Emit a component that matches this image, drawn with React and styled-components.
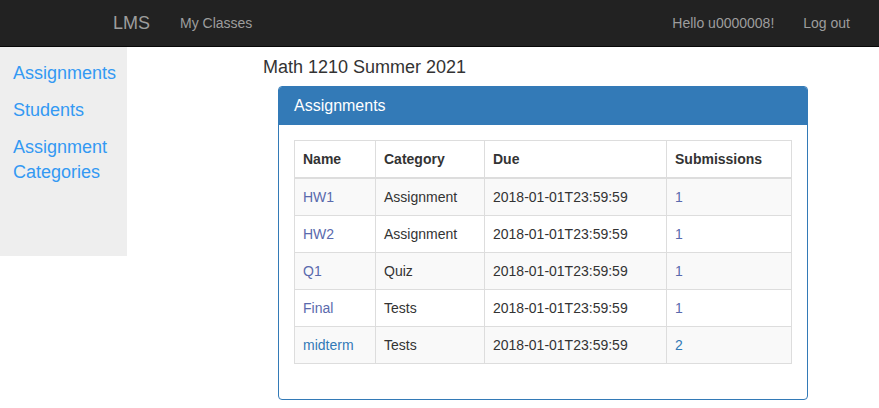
import React from "react";
import styled, { createGlobalStyle } from "styled-components";

const rows = [
  { name: "HW1", category: "Assignment", due: "2018-01-01T23:59:59", subs: "1", visited: true },
  { name: "HW2", category: "Assignment", due: "2018-01-01T23:59:59", subs: "1", visited: true },
  { name: "Q1", category: "Quiz", due: "2018-01-01T23:59:59", subs: "1", visited: true },
  { name: "Final", category: "Tests", due: "2018-01-01T23:59:59", subs: "1", visited: true },
  { name: "midterm", category: "Tests", due: "2018-01-01T23:59:59", subs: "2", visited: false },
];

const App = () => {
  return (
    <>
      <GlobalStyle />
      <Navbar>
        <NavLeft>
          <Brand>LMS</Brand>
          <NavLink>My Classes</NavLink>
        </NavLeft>
        <NavRight>
          <NavLink>Hello u0000008!</NavLink>
          <NavLink>Log out</NavLink>
        </NavRight>
      </Navbar>
      <Layout>
        <Sidebar>
          <SideLink>Assignments</SideLink>
          <SideLink>Students</SideLink>
          <SideLink>Assignment Categories</SideLink>
        </Sidebar>
        <Main>
          <Title>Math 1210 Summer 2021</Title>
          <Panel>
            <PanelHeading>Assignments</PanelHeading>
            <PanelBody>
              <Table>
                <colgroup>
                  <col style={{ width: 81 }} />
                  <col style={{ width: 109 }} />
                  <col style={{ width: 182 }} />
                  <col style={{ width: 125 }} />
                </colgroup>
                <thead>
                  <tr>
                    <Th>Name</Th>
                    <Th>Category</Th>
                    <Th>Due</Th>
                    <Th>Submissions</Th>
                  </tr>
                </thead>
                <tbody>
                  {rows.map((r, i) => (
                    <Row key={r.name} $striped={i % 2 === 0}>
                      <Td>
                        <CellLink $visited={r.visited}>{r.name}</CellLink>
                      </Td>
                      <Td>{r.category}</Td>
                      <Td>{r.due}</Td>
                      <Td>
                        <CellLink $visited={r.visited}>{r.subs}</CellLink>
                      </Td>
                    </Row>
                  ))}
                </tbody>
              </Table>
            </PanelBody>
          </Panel>
        </Main>
      </Layout>
    </>
  );
};

export default App;

const GlobalStyle = createGlobalStyle`
  body {
    margin: 0;
    background: #fff;
    font-family: "Liberation Sans", Arial, sans-serif;
    font-size: 14px;
    color: #333;
  }
`;
const Navbar = styled.nav`
  height: 46px;
  background: #222;
  border-bottom: 1px solid #080808;
  display: flex;
  align-items: center;
  justify-content: space-between;
`;
const NavLeft = styled.div`
  display: flex;
  align-items: center;
  margin-left: 98px;
`;
const NavRight = styled.div`
  display: flex;
  align-items: center;
  margin-right: 14px;
`;
const Brand = styled.a`
  font-size: 18px;
  color: #9d9d9d;
  padding: 0 15px;
`;
const NavLink = styled.a`
  font-size: 14px;
  color: #9d9d9d;
  padding: 0 15px;
  &:first-child {
    padding-right: 14px;
  }
`;
const Layout = styled.div`
  display: flex;
  align-items: flex-start;
`;
const Sidebar = styled.aside`
  width: 127px;
  height: 209px;
  box-sizing: border-box;
  background: #eee;
  padding: 14px 0 0 13px;
  display: flex;
  flex-direction: column;
  gap: 12px;
`;
const SideLink = styled.a`
  font-size: 18px;
  line-height: 25px;
  color: #3399f3;
`;
const Main = styled.main`
  padding-left: 136px;
`;
const Title = styled.h4`
  margin: 10px 0 9px;
  font-size: 18px;
  font-weight: 400;
  line-height: 20px;
  color: #333;
`;
const Panel = styled.section`
  margin-left: 15px;
  width: 530px;
  box-sizing: border-box;
  border: 1px solid #337ab7;
  border-radius: 4px;
  background: #fff;
`;
const PanelHeading = styled.h3`
  margin: 0;
  padding: 10px 15px;
  background: #337ab7;
  color: #fff;
  font-size: 16px;
  font-weight: 400;
  line-height: 18px;
  border-radius: 3px 3px 0 0;
`;
const PanelBody = styled.div`
  padding: 15px 15px 35px;
`;
const Table = styled.table`
  width: 497px;
  border-collapse: collapse;
  table-layout: fixed;
  border: 1px solid #ddd;
`;
const Th = styled.th`
  text-align: left;
  font-weight: 700;
  padding: 8px;
  line-height: 20px;
  border: 1px solid #ddd;
  border-bottom-width: 2px;
`;
const Row = styled.tr`
  background: ${(p) => (p.$striped ? "#f9f9f9" : "#fff")};
`;
const Td = styled.td`
  padding: 8px;
  line-height: 20px;
  border: 1px solid #ddd;
  white-space: nowrap;
`;
const CellLink = styled.a`
  color: ${(p) => (p.$visited ? "#5a6aad" : "#337ab7")};
`;
